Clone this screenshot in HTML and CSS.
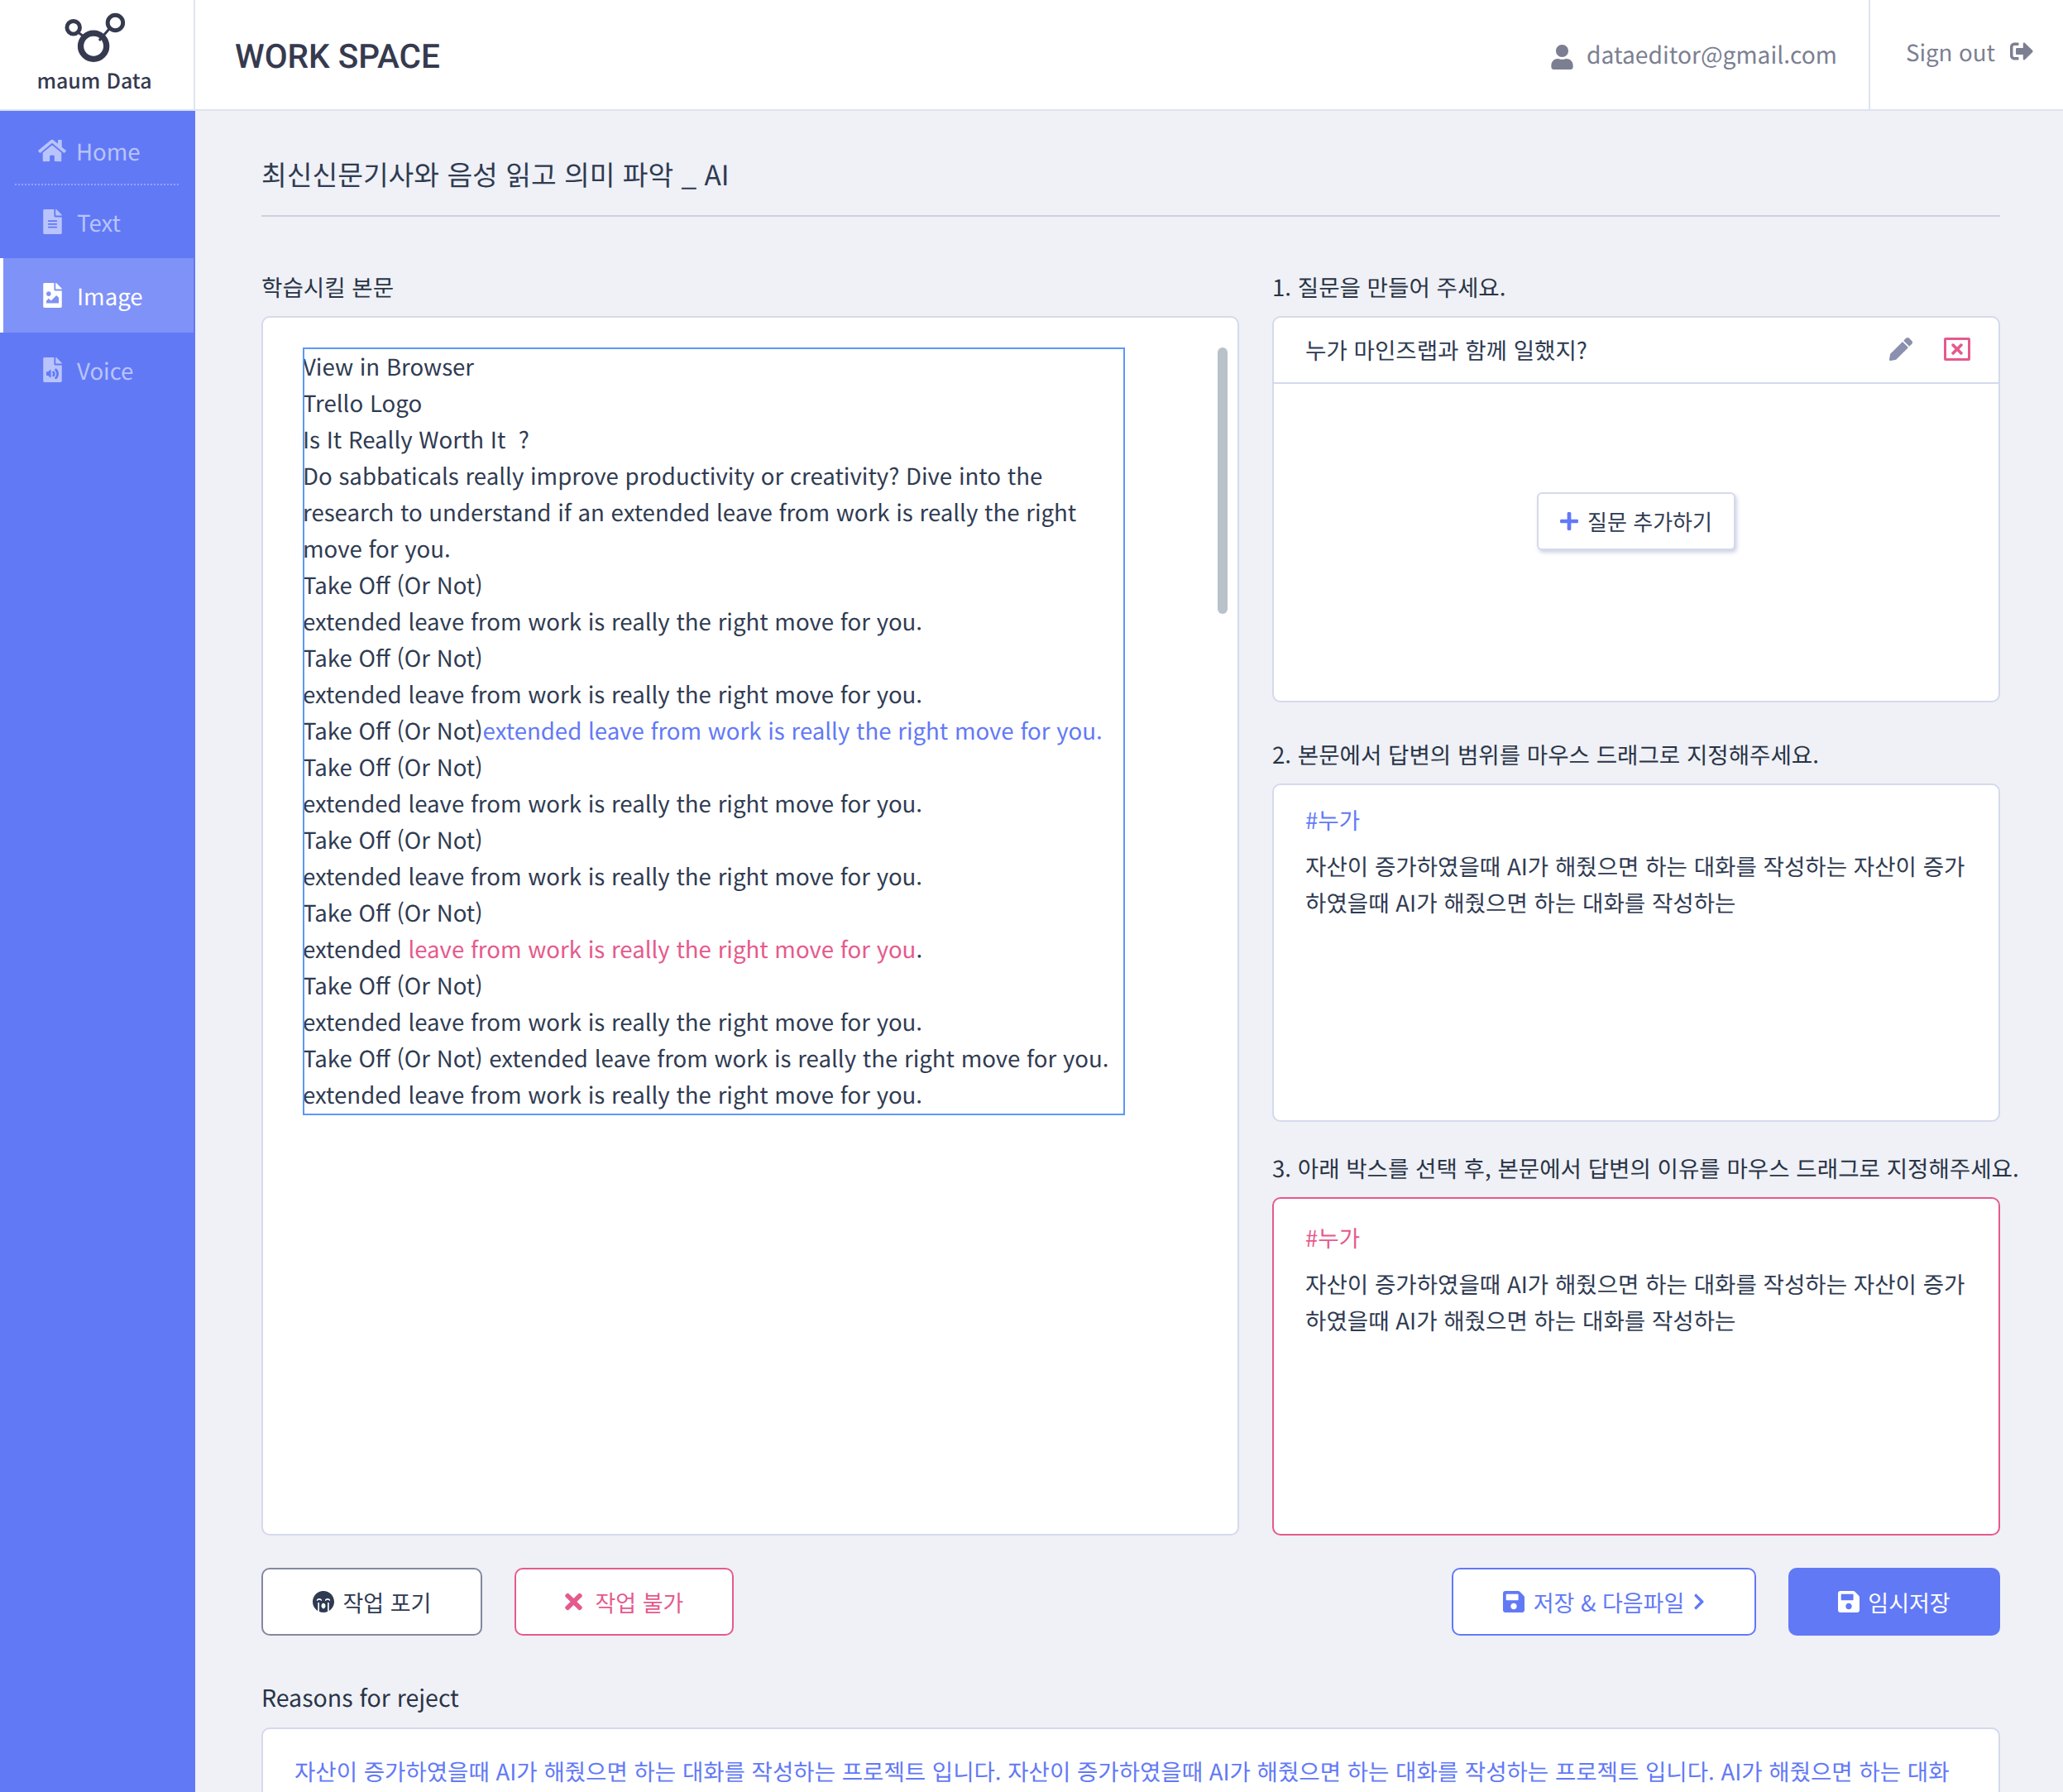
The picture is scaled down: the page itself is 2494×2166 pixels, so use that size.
FILE: index.html
```html
<!DOCTYPE html>
<html lang="ko">

<head>
	<title>maum Data - WORK SPACE</title>
	<link rel="stylesheet" href="styles.css">
</head>

<body>
	<div class="app">
		<div class="logo">
			<svg class="logo-mark" viewBox="0 0 80 62">
				<g fill="none" stroke="#363a4f">
					<circle cx="36" cy="41" r="16" stroke-width="7.5" />
					<circle cx="11" cy="18" r="8" stroke-width="5" />
					<circle cx="63" cy="12" r="9.5" stroke-width="5" />
					<path d="M17 24l8 6M56 19L43 34" stroke-width="3" />
				</g>
			</svg>
			<div class="logo-text">maum Data</div>
		</div>

		<header class="topbar">
			<h1 class="page-name">WORK SPACE</h1>
			<div class="user">
				<svg class="ico ico-user" viewBox="0 0 448 512"><path d="M224 256c70.7 0 128-57.3 128-128S294.7 0 224 0 96 57.3 96 128s57.3 128 128 128zm89.6 32h-16.7c-22.2 10.2-46.9 16-72.9 16s-50.6-5.8-72.9-16h-16.7C60.2 288 0 348.2 0 422.4V464c0 26.5 21.5 48 48 48h352c26.5 0 48-21.5 48-48v-41.6c0-74.2-60.2-134.4-134.4-134.4z" /></svg>
				<span>dataeditor@gmail.com</span>
			</div>
			<div class="signout">
				<span>Sign out</span>
				<svg class="ico ico-out" viewBox="0 0 512 512"><path d="M497 273L329 441c-15 15-41 4.5-41-17v-96H152c-13.3 0-24-10.7-24-24v-96c0-13.3 10.7-24 24-24h136V88c0-21.4 25.9-32 41-17l168 168c9.3 9.4 9.3 24.6 0 34zM192 436v-40c0-6.6-5.4-12-12-12H96c-17.7 0-32-14.3-32-32V160c0-17.7 14.3-32 32-32h84c6.6 0 12-5.4 12-12V76c0-6.6-5.4-12-12-12H96c-53 0-96 43-96 96v192c0 53 43 96 96 96h84c6.6 0 12-5.4 12-12z" /></svg>
			</div>
		</header>

		<nav class="sidebar">
			<a class="nav-item nav-home">
				<svg class="ico ico-home" viewBox="0 0 576 512"><path d="M280.37 148.26L96 300.11V464a16 16 0 0 0 16 16l112.06-.29a16 16 0 0 0 15.92-16V368a16 16 0 0 1 16-16h64a16 16 0 0 1 16 16v95.64a16 16 0 0 0 16 16.05L464 480a16 16 0 0 0 16-16V300L295.67 148.26a12.19 12.19 0 0 0-15.3 0zM571.6 251.47L488 182.56V44.05a12 12 0 0 0-12-12h-56a12 12 0 0 0-12 12v72.61L318.47 43a48 48 0 0 0-61 0L4.34 251.47a12 12 0 0 0-1.6 16.9l25.5 31A12 12 0 0 0 45.15 301l235.22-193.74a12.19 12.19 0 0 1 15.3 0L530.9 301a12 12 0 0 0 16.9-1.6l25.5-31a12 12 0 0 0-1.7-16.93z" /></svg>
				Home
			</a>
			<a class="nav-item">
				<svg class="ico ico-file" viewBox="0 0 384 512"><path d="M224 136V0H24C10.7 0 0 10.7 0 24v464c0 13.3 10.7 24 24 24h336c13.3 0 24-10.7 24-24V160H248c-13.2 0-24-10.8-24-24zm64 236c0 6.6-5.4 12-12 12H108c-6.6 0-12-5.4-12-12v-8c0-6.6 5.4-12 12-12h168c6.6 0 12 5.4 12 12v8zm0-64c0 6.6-5.4 12-12 12H108c-6.6 0-12-5.4-12-12v-8c0-6.6 5.4-12 12-12h168c6.6 0 12 5.4 12 12v8zm0-72v8c0 6.6-5.4 12-12 12H108c-6.6 0-12-5.4-12-12v-8c0-6.6 5.4-12 12-12h168c6.6 0 12 5.4 12 12zm96-114.1v6.1H256V0h6.1c6.4 0 12.5 2.5 17 7l97.9 98c4.5 4.5 7 10.6 7 16.9z" /></svg>
				Text
			</a>
			<a class="nav-item active">
				<svg class="ico ico-file" viewBox="0 0 384 512"><path d="M384 121.941V128H256V0h6.059a24 24 0 0 1 16.97 7.029l97.941 97.941a24.002 24.002 0 0 1 7.03 16.971zM248 160c-13.2 0-24-10.8-24-24V0H24C10.745 0 0 10.745 0 24v464c0 13.255 10.745 24 24 24h336c13.255 0 24-10.745 24-24V160H248zm-135.455 16c26.51 0 48 21.49 48 48s-21.49 48-48 48-48-21.49-48-48 21.491-48 48-48zm208 240h-256l.485-48.485L104.545 328c4.686-4.686 11.799-4.201 16.485.485L160.545 368 264.06 264.485c4.686-4.686 12.284-4.686 16.971 0L320.545 304v112z" /></svg>
				Image
			</a>
			<a class="nav-item">
				<svg class="ico ico-file" viewBox="0 0 384 512"><path d="M224 136V0H24C10.7 0 0 10.7 0 24v464c0 13.3 10.7 24 24 24h336c13.3 0 24-10.7 24-24V160H248c-13.2 0-24-10.8-24-24zm-64 268c0 10.7-12.9 16-20.5 8.5L104 376H76c-6.6 0-12-5.4-12-12v-56c0-6.6 5.4-12 12-12h28l35.5-36.5c7.6-7.6 20.5-2.2 20.5 8.5v136zm33.2-47.6c9.1-9.3 9.1-24.1 0-33.4-22.1-22.8 12.2-56.2 34.4-33.5 27.2 27.9 27.2 72.4 0 100.4-21.8 22.3-56.9-10.4-34.4-33.5zm86-117.1c54.4 55.9 54.4 144.8 0 200.8-21.8 22.4-57-10.3-34.4-33.5 36.2-37.2 36.3-96.5 0-133.8-22.1-22.8 12.3-56.3 34.4-33.5zM384 121.9v6.1H256V0h6.1c6.4 0 12.5 2.5 17 7l97.9 98c4.5 4.5 7 10.6 7 16.9z" /></svg>
				Voice
			</a>
		</nav>

		<main class="content">
			<h2 class="title">최신신문기사와 음성 읽고 의미 파악 _ AI</h2>

			<div class="panels">
				<section class="col-left">
					<div class="label">학습시킬 본문</div>
					<div class="card doc">
						<div class="selection">
							View in Browser<br>
							Trello Logo<br>
							Is It Really Worth It &nbsp;?<br>
							Do sabbaticals really improve productivity or creativity? Dive into the research to understand if an extended leave from work is really the right move for you.<br>
							Take Off (Or Not)<br>
							extended leave from work is really the right move for you.<br>
							Take Off (Or Not)<br>
							extended leave from work is really the right move for you.<br>
							Take Off (Or Not)<span class="blue">extended leave from work is really the right move for you.</span><br>
							Take Off (Or Not)<br>
							extended leave from work is really the right move for you.<br>
							Take Off (Or Not)<br>
							extended leave from work is really the right move for you.<br>
							Take Off (Or Not)<br>
							extended <span class="pink">leave from work is really the right move for you</span>.<br>
							Take Off (Or Not)<br>
							extended leave from work is really the right move for you.<br>
							Take Off (Or Not) extended leave from work is really the right move for you.<br>
							extended leave from work is really the right move for you.
						</div>
						<div class="scroll-thumb"></div>
					</div>
				</section>

				<section class="col-right">
					<div class="label">1. 질문을 만들어 주세요.</div>
					<div class="card question">
						<div class="question-head">
							<span class="question-text">누가 마인즈랩과 함께 일했지?</span>
							<svg class="ico ico-pencil" viewBox="0 0 512 512"><path d="M497.9 142.1l-46.1 46.1c-4.7 4.7-12.3 4.7-17 0l-111-111c-4.7-4.7-4.7-12.3 0-17l46.1-46.1c18.7-18.7 49.1-18.7 67.9 0l60.1 60.1c18.8 18.7 18.8 49.1 0 67.9zM284.2 99.8L21.6 362.4.4 483.9c-2.9 16.4 11.4 30.6 27.8 27.8l121.5-21.3 262.6-262.6c4.7-4.7 4.7-12.3 0-17l-111-111c-4.8-4.7-12.4-4.7-17.1 0z" /></svg>
							<span class="close-box">
								<svg class="ico ico-close" viewBox="0 0 352 512"><path d="M242.72 256l100.07-100.07c12.28-12.28 12.28-32.19 0-44.48l-22.24-22.24c-12.28-12.28-32.19-12.28-44.48 0L176 189.28 75.93 89.21c-12.28-12.28-32.19-12.28-44.48 0L9.21 111.45c-12.28 12.28-12.28 32.19 0 44.48L109.28 256 9.21 356.07c-12.28 12.28-12.28 32.19 0 44.48l22.24 22.24c12.28 12.28 32.2 12.28 44.48 0L176 322.72l100.07 100.07c12.28 12.28 32.2 12.28 44.48 0l22.24-22.24c12.28-12.28 12.28-32.19 0-44.48L242.72 256z" /></svg>
							</span>
						</div>
						<div class="question-body">
							<button class="add-btn">
								<svg class="ico ico-plus" viewBox="0 0 448 512"><path d="M416 208H272V64c0-17.67-14.33-32-32-32h-32c-17.67 0-32 14.33-32 32v144H32c-17.67 0-32 14.33-32 32v32c0 17.67 14.33 32 32 32h144v144c0 17.67 14.33 32 32 32h32c17.67 0 32-14.33 32-32V304h144c17.67 0 32-14.33 32-32v-32c0-17.67-14.33-32-32-32z" /></svg>
								질문 추가하기
							</button>
						</div>
					</div>

					<div class="label label-2">2. 본문에서 답변의 범위를 마우스 드래그로 지정해주세요.</div>
					<div class="card answer">
						<div class="tag">#누가</div>
						<p>자산이 증가하였을때 AI가 해줬으면 하는 대화를 작성하는 자산이 증가하였을때 AI가 해줬으면 하는 대화를 작성하는</p>
					</div>

					<div class="label label-3">3. 아래 박스를 선택 후, 본문에서 답변의 이유를 마우스 드래그로 지정해주세요.</div>
					<div class="card answer answer-on">
						<div class="tag">#누가</div>
						<p>자산이 증가하였을때 AI가 해줬으면 하는 대화를 작성하는 자산이 증가하였을때 AI가 해줬으면 하는 대화를 작성하는</p>
					</div>
				</section>
			</div>

			<div class="actions">
				<button class="btn btn-giveup">
					<svg class="ico ico-btn" viewBox="0 0 496 512"><path d="M248 8C111 8 0 119 0 256c0 90.1 48.2 168.7 120 212.1V288c0-8.8 7.2-16 16-16s16 7.2 16 16v196.7c29.5 12.4 62 19.3 96 19.3s66.5-6.9 96-19.3V288c0-8.8 7.2-16 16-16s16 7.2 16 16v180.1C447.8 424.7 496 346 496 256 496 119 385 8 248 8zm-65.5 216.5c-14.8-13.2-46.2-13.2-61 0L112 233c-3.8 3.3-9.3 4-13.7 1.6-4.4-2.4-6.9-7.4-6.1-12.4 4-25.2 34.2-42.1 59.9-42.1S208 197 212 222.2c.8 5-1.7 10-6.1 12.4-5.8 3.1-11.2.7-13.7-1.6l-9.7-8.5zM248 416c-26.5 0-48-28.7-48-64s21.5-64 48-64 48 28.7 48 64-21.5 64-48 64zm149.8-181.5c-5.8 3.1-11.2.7-13.7-1.6l-9.5-8.5c-14.8-13.2-46.2-13.2-61 0L304 233c-3.8 3.3-9.3 4-13.7 1.6-4.4-2.4-6.9-7.4-6.1-12.4 4-25.2 34.2-42.1 59.9-42.1S400 197 404 222.2c.6 4.9-1.9 9.9-6.2 12.3z" /></svg>
					작업 포기
				</button>
				<button class="btn btn-reject">
					<svg class="ico ico-btn" viewBox="0 0 352 512"><path d="M242.72 256l100.07-100.07c12.28-12.28 12.28-32.19 0-44.48l-22.24-22.24c-12.28-12.28-32.19-12.28-44.48 0L176 189.28 75.93 89.21c-12.28-12.28-32.19-12.28-44.48 0L9.21 111.45c-12.28 12.28-12.28 32.19 0 44.48L109.28 256 9.21 356.07c-12.28 12.28-12.28 32.19 0 44.48l22.24 22.24c12.28 12.28 32.2 12.28 44.48 0L176 322.72l100.07 100.07c12.28 12.28 32.2 12.28 44.48 0l22.24-22.24c12.28-12.28 12.28-32.19 0-44.48L242.72 256z" /></svg>
					작업 불가
				</button>
				<button class="btn btn-next">
					<svg class="ico ico-btn" viewBox="0 0 448 512"><path d="M433.941 129.941l-83.882-83.882A48 48 0 0 0 316.118 32H48C21.49 32 0 53.49 0 80v352c0 26.51 21.49 48 48 48h352c26.51 0 48-21.49 48-48V163.882a48 48 0 0 0-14.059-33.941zM224 416c-35.346 0-64-28.654-64-64 0-35.346 28.654-64 64-64s64 28.654 64 64c0 35.346-28.654 64-64 64zm96-304.52V212c0 6.627-5.373 12-12 12H76c-6.627 0-12-5.373-12-12V108c0-6.627 5.373-12 12-12h228.52c3.183 0 6.235 1.264 8.485 3.515l3.48 3.48A11.996 11.996 0 0 1 320 111.48z" /></svg>
					저장 &amp; 다음파일
					<svg class="ico ico-chev" viewBox="0 0 320 512"><path d="M285.476 272.971L91.132 467.314c-9.373 9.373-24.569 9.373-33.941 0l-22.667-22.667c-9.357-9.357-9.375-24.522-.04-33.901L188.505 256 34.484 101.255c-9.335-9.379-9.317-24.544.04-33.901l22.667-22.667c9.373-9.373 24.569-9.373 33.941 0L285.475 239.03c9.373 9.372 9.373 24.568.001 33.941z" /></svg>
				</button>
				<button class="btn btn-save">
					<svg class="ico ico-btn" viewBox="0 0 448 512"><path d="M433.941 129.941l-83.882-83.882A48 48 0 0 0 316.118 32H48C21.49 32 0 53.49 0 80v352c0 26.51 21.49 48 48 48h352c26.51 0 48-21.49 48-48V163.882a48 48 0 0 0-14.059-33.941zM224 416c-35.346 0-64-28.654-64-64 0-35.346 28.654-64 64-64s64 28.654 64 64c0 35.346-28.654 64-64 64zm96-304.52V212c0 6.627-5.373 12-12 12H76c-6.627 0-12-5.373-12-12V108c0-6.627 5.373-12 12-12h228.52c3.183 0 6.235 1.264 8.485 3.515l3.48 3.48A11.996 11.996 0 0 1 320 111.48z" /></svg>
					임시저장
				</button>
			</div>

			<div class="label label-reject">Reasons for reject</div>
			<div class="card reject-box">자산이 증가하였을때 AI가 해줬으면 하는 대화를 작성하는 프로젝트 입니다. 자산이 증가하였을때 AI가 해줬으면 하는 대화를 작성하는 프로젝트 입니다. AI가 해줬으면 하는 대화</div>
		</main>
	</div>
</body>

</html>
```

FILE: styles.css
```css
* {
	box-sizing: border-box;
}

html,
body {
	margin: 0;
	height: 100%;
	overflow: hidden;
}

body {
	font-family: "Noto Sans CJK KR", "Noto Sans", sans-serif;
	font-size: 27.6px;
	color: #2f3b52;
	background-color: #eff1f6;
	text-rendering: geometricPrecision;
}

.app {
	display: grid;
	grid-template-columns: 236px 1fr;
	grid-template-rows: 134px 1fr;
	height: 100vh;
	overflow: hidden;
}

.ico {
	display: block;
	flex: none;
	fill: currentColor;
}

/* logo + top bar */

.logo {
	display: flex;
	flex-direction: column;
	align-items: center;
	background-color: #fff;
	border-right: 2px solid #dfe3f1;
	border-bottom: 2px solid #dfe3f1;
	padding: 15px 6px 0 0;
}

.logo-mark {
	width: 78px;
	height: 62px;
	margin-left: 6px;
}

.logo-text {
	font-size: 25px;
	font-weight: 500;
	line-height: 34px;
	color: #363a4f;
	margin-top: 3px;
}

.topbar {
	display: flex;
	align-items: center;
	background-color: #fff;
	border-bottom: 2px solid #dfe3f1;
	padding-left: 48px;
}

.page-name {
	flex: 1;
	margin: 0;
	padding-top: 4px;
	font-family: Roboto, sans-serif;
	font-size: 40.5px;
	font-weight: 500;
	color: #363a4f;
}

.user {
	display: flex;
	align-items: center;
	gap: 16px;
	font-size: 28.2px;
	color: #7c7f92;
	padding: 0 38px 1px 0;
}

.ico-user {
	width: 27px;
	height: 30px;
	margin-top: 6px;
}

.signout {
	display: flex;
	align-items: center;
	gap: 18px;
	align-self: stretch;
	color: #7c7f92;
	border-left: 2px solid #dfe3f1;
	padding: 0 36px 8px 43px;
}

.ico-out {
	width: 28px;
	height: 28px;
}

/* sidebar */

.sidebar {
	background-color: #6279f6;
}

.nav-item {
	display: flex;
	align-items: center;
	gap: 18px;
	height: 90px;
	padding-left: 52px;
	color: #b8c4fb;
}

.nav-item:nth-child(2) {
	height: 88px;
}

.nav-home {
	padding: 6px 0 0 46px;
	gap: 12px;
	position: relative;
}

.nav-home::after {
	content: "";
	position: absolute;
	left: 18px;
	right: 20px;
	bottom: 0;
	border-bottom: 2px dotted #94a4f9;
}

.ico-home {
	width: 34px;
	height: 30px;
}

.ico-file {
	width: 23px;
	height: 30px;
}

.active {
	background-color: #7f92f7;
	color: #fff;
	border-left: 4px solid #fff;
	margin-right: 2px;
	padding-left: 48px;
}

/* main column */

.content {
	padding: 0 76px 0 80px;
	overflow: hidden;
}

.title {
	margin: 0;
	height: 128px;
	padding-top: 51px;
	font-size: 33.4px;
	line-height: 50px;
	font-weight: 400;
	border-bottom: 2px solid #ccd0e0;
}

.panels {
	display: grid;
	grid-template-columns: 1182px 880px;
	gap: 40px;
	margin-top: 58px;
}

.label {
	height: 62px;
	padding-top: 1px;
	line-height: 50px;
	color: #2a3446;
	white-space: nowrap;
}

.card {
	background-color: #fff;
	border: 2px solid #d5d9ec;
	border-radius: 10px;
}

.doc {
	position: relative;
	height: 1474px;
	padding: 36px 0 0 48px;
}

.selection {
	width: 994px;
	padding: 0 0 4px;
	outline: 2px solid #5b98f5;
	outline-offset: -2px;
	line-height: 44px;
}

.blue {
	color: #6279f6;
}

.pink {
	color: #e55a8c;
}

.scroll-thumb {
	position: absolute;
	left: 1154px;
	top: 36px;
	width: 12px;
	height: 322px;
	border-radius: 6px;
	background-color: #b9c1c9;
}

.question {
	display: flex;
	flex-direction: column;
	height: 467px;
}

.question-head {
	display: flex;
	align-items: center;
	height: 80px;
	padding: 0 34px 2px 38px;
	border-bottom: 2px solid #d5d9ec;
}

.question-text {
	flex: 1;
}

.ico-pencil {
	width: 28px;
	height: 30px;
	color: #8a90ae;
	margin-right: 38px;
}

.close-box {
	display: flex;
	align-items: center;
	justify-content: center;
	width: 32px;
	height: 28px;
	border: 3px solid #e55a8c;
	border-radius: 2px;
	color: #e55a8c;
}

.ico-close {
	width: 14px;
	height: 20px;
}

.question-body {
	flex: 1;
	display: flex;
	align-items: center;
	justify-content: center;
	padding-bottom: 52px;
}

.add-btn {
	display: flex;
	align-items: center;
	justify-content: center;
	gap: 11px;
	width: 240px;
	height: 70px;
	background-color: #fff;
	border: 2px solid #d5d9ec;
	border-radius: 6px;
	box-shadow: 2px 3px 4px rgba(160, 168, 205, .5);
	font: inherit;
	font-size: 26px;
	color: #2f3b52;
}

.ico-plus {
	width: 22px;
	height: 26px;
	color: #6279f6;
}

.label-2 {
	margin-top: 36px;
}

.label-3 {
	margin-top: 29px;
}

.answer {
	height: 409px;
	padding: 19px 38px 0;
}

.tag {
	color: #6279f6;
	line-height: 44px;
	margin-bottom: 12px;
}

.answer p {
	margin: 0;
	line-height: 44px;
}

.answer-on {
	border-color: #e55a8c;
	padding-top: 24px;
}

.answer-on .tag {
	color: #e55a8c;
}

/* buttons */

.actions {
	display: flex;
	gap: 39px;
	margin-top: 39px;
}

.btn {
	display: flex;
	align-items: center;
	justify-content: center;
	gap: 11px;
	height: 82px;
	background-color: #fff;
	border: 2px solid;
	border-radius: 10px;
	font: inherit;
	font-size: 27px;
}

.ico-btn {
	width: 26px;
	height: 30px;
}

.btn-giveup {
	width: 267px;
	border-color: #83889f;
	color: #2f3b52;
}

.btn-reject {
	gap: 16px;
	width: 265px;
	border-color: #e55a8c;
	color: #e55a8c;
}

.btn-reject .ico-btn {
	width: 21px;
}

.btn-next {
	width: 368px;
	margin-left: auto;
	border-color: #6279f6;
	color: #6279f6;
}

.ico-chev {
	width: 14px;
	height: 22px;
}

.btn-save {
	gap: 10px;
	width: 256px;
	background-color: #6279f6;
	border-color: #6279f6;
	color: #fff;
}

.label-reject {
	margin-top: 49px;
	font-size: 28.5px;
}

.reject-box {
	height: 200px;
	padding: 28px 38px 0;
	line-height: 44px;
	font-size: 27.55px;
	color: #6279f6;
}
```
